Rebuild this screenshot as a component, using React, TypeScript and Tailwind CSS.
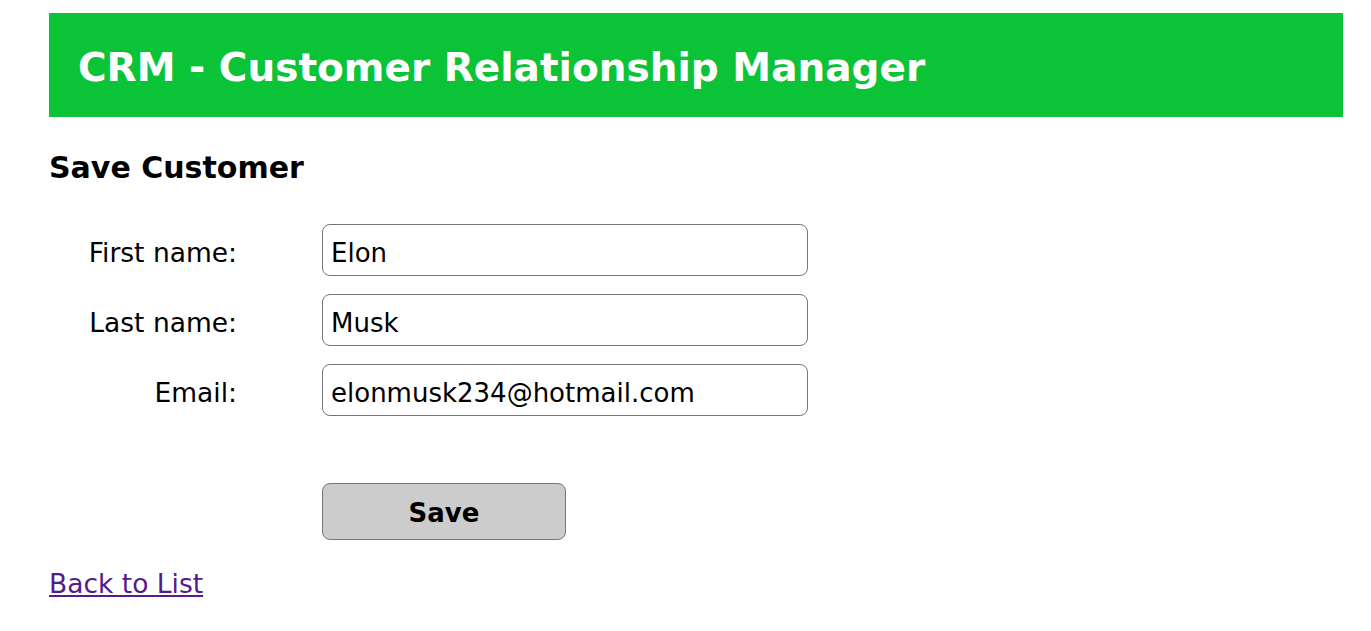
import React from "react";

const fields = [
  { label: "First name:", value: "Elon" },
  { label: "Last name:", value: "Musk" },
  { label: "Email:", value: "elonmusk234@hotmail.com" },
];

export default function App() {
  return (
    <div className="min-h-[631px] bg-white text-black" style={{ fontFamily: '"DejaVu Sans", Verdana, sans-serif' }}>
      <div className="pt-[13px] pl-[49px]">
        <div className="w-[1294px] h-[104px] bg-[#0bc336] flex items-center pl-[29px] pt-[4px]">
          <h1 className="text-white font-bold text-[39px] leading-none">CRM - Customer Relationship Manager</h1>
        </div>
        <h2 className="mt-[36px] font-bold text-[30px] leading-none">Save Customer</h2>
        <div className="mt-[41px] flex flex-col gap-[18px]">
          {fields.map((f) => (
            <div key={f.label} className="flex items-center">
              <label className="w-[188px] text-right text-[26.5px] pt-[5px]">{f.label}</label>
              <input
                readOnly
                value={f.value}
                className="ml-[85px] w-[486px] h-[52px] border border-[#767676] rounded-[8px] pl-[8px] pt-[5px] text-[26px] text-black outline-none"
                style={{ fontFamily: '"DejaVu Sans", Verdana, sans-serif' }}
              />
            </div>
          ))}
        </div>
        <div className="mt-[67px] pl-[273px]">
          <button className="w-[244px] h-[57px] bg-[#cccccc] border border-[#767676] rounded-[8px] font-bold text-[26px] pt-[4px]">
            Save
          </button>
        </div>
        <div className="mt-[24px]">
          <a href="#" className="text-[#551a8b] underline text-[26.5px]">Back to List</a>
        </div>
      </div>
    </div>
  );
}
